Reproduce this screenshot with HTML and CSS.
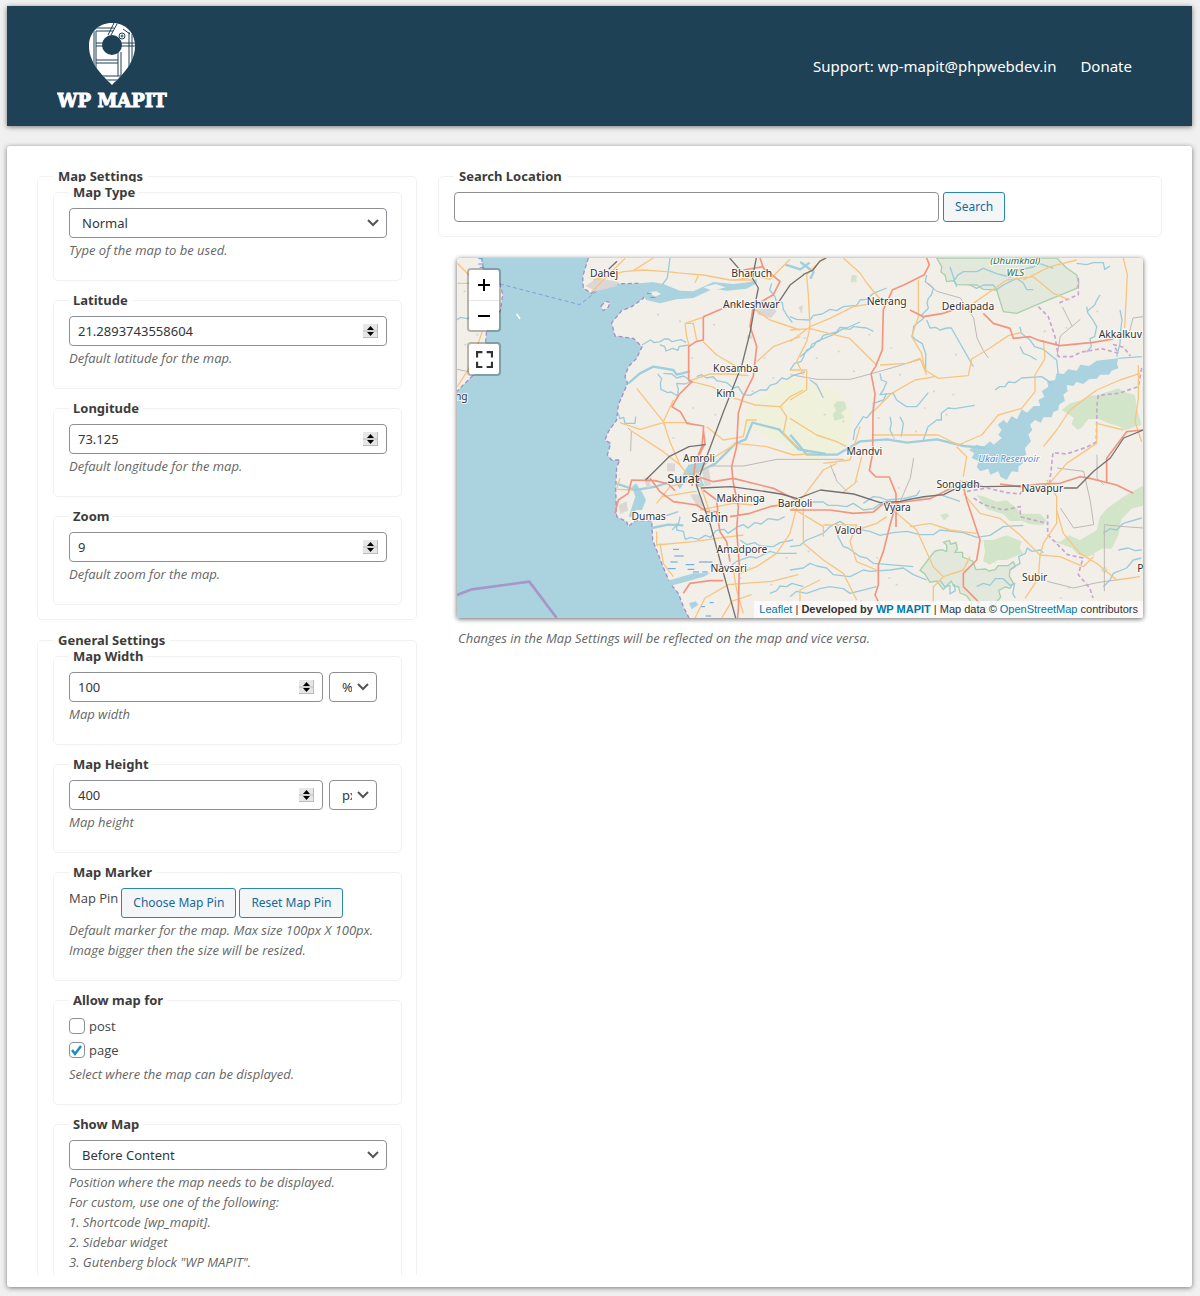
FILE: index.html
```html
<!DOCTYPE html>
<html lang="en">
<head>
<meta charset="utf-8">
<meta name="viewport" content="width=device-width, initial-scale=1">
<title>WP MAPIT Settings</title>
<link rel="stylesheet" href="styles.css">
</head>
<body>
<header class="topbar">
  <svg class="logo" viewBox="0 0 112 88" role="img" aria-label="WP MAPIT">
    <defs>
      <clipPath id="pin"><path d="M55 1C41 1 32 11 32 24c0 17 13 29 23 39 10-10 23-22 23-39C78 11 69 1 55 1z"/></clipPath>
    </defs>
    <g clip-path="url(#pin)">
      <path fill="#fff" d="M30 0h50v64H30z"/>
      <g fill="none" stroke="#1e4156" stroke-width="1">
        <path d="M37 9v44M39 9v44M37 6h20M39 9h17M57 1l-6 12M60 2l-6 11M39 21h7M39 24h7M64 21h14M64 24h14M39 38h22M39 41h22M61 30v24M64 30v24M72 10v40M75 12v34M66 7l7 5M38 54h34M42 58h26"/>
        <circle cx="65" cy="14" r="3"/><circle cx="65" cy="14" r="1"/>
      </g>
      <circle cx="55" cy="23" r="10" fill="#1e4156"/>
    </g>
    <text class="logo-text" x="55" y="85" text-anchor="middle">WP MAPIT</text>
  </svg>
  <nav class="topnav">
    <a href="mailto:wp-mapit@phpwebdev.in">Support: wp-mapit@phpwebdev.in</a>
    <a href="#donate">Donate</a>
  </nav>
</header>

<main class="panel">
  <form class="settings">
    <fieldset class="group">
      <legend class="legend-cut">Map Settings</legend>
      <fieldset class="field">
        <legend><label for="type">Map Type</label></legend>
        <select id="type" class="control"><option>Normal</option></select>
        <p class="hint">Type of the map to be used.</p>
      </fieldset>
      <fieldset class="field">
        <legend><label for="lat">Latitude</label></legend>
        <input id="lat" class="control" type="number" step="any" value="21.2893743558604">
        <p class="hint">Default latitude for the map.</p>
      </fieldset>
      <fieldset class="field">
        <legend><label for="lng">Longitude</label></legend>
        <input id="lng" class="control" type="number" step="any" value="73.125">
        <p class="hint">Default longitude for the map.</p>
      </fieldset>
      <fieldset class="field">
        <legend><label for="zoom">Zoom</label></legend>
        <input id="zoom" class="control" type="number" value="9">
        <p class="hint">Default zoom for the map.</p>
      </fieldset>
    </fieldset>

    <fieldset class="group group-open">
      <legend>General Settings</legend>
      <fieldset class="field">
        <legend><label for="width">Map Width</label></legend>
        <div class="size-row">
          <input id="width" class="control" type="number" value="100">
          <select class="control unit" aria-label="Width unit"><option>%</option><option>px</option></select>
        </div>
        <p class="hint">Map width</p>
      </fieldset>
      <fieldset class="field">
        <legend><label for="height">Map Height</label></legend>
        <div class="size-row">
          <input id="height" class="control" type="number" value="400">
          <select class="control unit" aria-label="Height unit"><option>px</option><option>%</option></select>
        </div>
        <p class="hint">Map height</p>
      </fieldset>
      <fieldset class="field">
        <legend>Map Marker</legend>
        <div class="pin-row">
          <span>Map Pin</span>
          <button type="button" class="button">Choose Map Pin</button>
          <button type="button" class="button">Reset Map Pin</button>
        </div>
        <p class="hint">Default marker for the map. Max size 100px X 100px.<br>Image bigger then the size will be resized.</p>
      </fieldset>
      <fieldset class="field field-checks">
        <legend>Allow map for</legend>
        <label class="check"><input type="checkbox"> post</label>
        <label class="check"><input type="checkbox" checked> page</label>
        <p class="hint">Select where the map can be displayed.</p>
      </fieldset>
      <fieldset class="field field-open">
        <legend><label for="show">Show Map</label></legend>
        <select id="show" class="control"><option>Before Content</option></select>
        <p class="hint">Position where the map needs to be displayed.<br>For custom, use one of the following:<br>1. Shortcode [wp_mapit].<br>2. Sidebar widget<br>3. Gutenberg block "WP MAPIT".</p>
      </fieldset>
    </fieldset>
  </form>

  <section class="preview">
    <fieldset class="group">
      <legend><label for="search">Search Location</label></legend>
      <div class="search-row">
        <input id="search" class="control" type="text">
        <button type="button" class="button">Search</button>
      </div>
    </fieldset>

    <div class="map">
      <svg class="map-canvas" viewBox="0 0 2058 1080" preserveAspectRatio="xMidYMid slice" aria-label="Map of Surat and surroundings">
        <path class="sea" d="M0 0h2058v1080H0z"/>
        <!-- land masses -->
        <path class="land" d="M0 0H74L79 36 129 76 137 110 131 156 89 216 84 276 54 346 0 400z"/>
        <path class="land" d="M394 0L377 56 379 91 404 106 419 91 449 78 549 76 562 96 559 121 524 146 494 158 464 194 474 234 529 241 555 266 539 301 514 326 504 356 512 376 499 406 484 441 479 486 454 521 444 546 461 556 451 591 464 606 489 606 479 626 476 696 479 776 509 791 514 806 534 788 584 788 587 846 614 916 639 976 664 1006 679 1046 696 1080H2058V0z"/>
        <path class="land coast" d="M432 144l14-14 14 4-8 16-14 8z"/>
        <path class="coast" d="M74 0L79 36 129 76 137 110 131 156 89 216 84 276 54 346 0 400M394 0L377 56 379 91 404 106 419 91 449 78 549 76 562 96 559 121 524 146 494 158 464 194 474 234 529 241 555 266 539 301 514 326 504 356 512 376 499 406 484 441 479 486 454 521 444 546 461 556 451 591 464 606 489 606 479 626 476 696 479 776 509 791 514 806 534 788 584 788 587 846 614 916 639 976 664 1006 679 1046 696 1080"/>
        <path class="white" d="M179 168l10 14"/>
        <path class="ferry" d="M129 78L368 140 425 95"/>
        <path class="boundary" d="M0 1011L45 994 217 971 299 1080"/>

        <!-- fields and forests -->
        <path class="scrub" d="M905 420L1000 360 1140 400 1190 470 1170 560 1100 600 1060 618 980 560 900 520 850 500z"/>
        <g class="forest" transform="translate(999 -24)">
          <path d="M815 480l25-20 35-10 20-12 30-3 60-20 15 10 35 10 5 40 15 50-20 5-30 10-20-12-30-8-30-14-30 2-20 25-12 6-18-16 6-20z"/>
          <path d="M130 465l14-12 20 2 6 20-16 14 10 14-30 10-6-20 10-12zM185 75l15 0 0 22-18 0z"/>
          <path d="M560 735l20 4 40 16 30-4 30 24 10 16 60 0 20 20-10 14-40-2-24-10-36 0-20-20-50-16zM580 870l30 0 40-14 20 8 25 10-6 20 10 16-50 20-24 0-26 14-20-10 6-30zM780 870l30 6 26-20 34 14 50-30 10-40 20-24 50-36 60-34 25 40-20 20-40 10-30 30-10 50-20 40-30 0-40 24-30-6-20-20zM450 795l20-6 8 10-16 12zM930 960l16-10 8 10-10 10z"/>
        </g>
        <g class="park" transform="translate(999 -24)">
          <path d="M440 24L455 50 453 66 465 75 470 95 490 92 500 104 560 105 580 118 620 120 640 185 680 190 750 160 860 115 867 100 860 75 830 54 800 24z"/>
          <path d="M425 915l10-12 20-4 15 6 0-20-10-8 18-6 4 12 16-6 4 20-8 10 24 0 0 14 30 12 10 26 30-2 8 6 20-4 8-12 30 0 16-12 6 14-16 10-2 20 12 20-10 16-14-4-20 10 6 20-16 20 4 20-60 14-16-14 0-24-14-20-20-8-4-18-16-4-6-14-24 26-20-26-20 4-16-26-14-10z"/>
        </g>

        <!-- water -->
        <path class="water" d="M1984 301L1980 316 1984 331 1964 338 1956 350 1929 350 1920 362 1896 364 1879 378 1858 372 1850 384 1829 381 1832 400 1819 410 1824 428 1806 440 1804 456 1789 462 1784 478 1759 478 1752 494 1734 486 1719 500 1726 516 1714 530 1722 550 1704 570 1708 590 1694 598 1698 616 1684 626 1684 642 1664 640 1649 666 1630 656 1624 640 1600 650 1594 632 1570 640 1559 626 1566 610 1544 600 1552 586 1536 576 1559 560 1580 566 1599 550 1610 560 1634 540 1624 530 1634 516 1622 500 1640 486 1650 496 1664 474 1680 484 1694 454 1710 464 1730 444 1750 444 1744 426 1762 416 1754 400 1774 386 1770 370 1794 366 1799 346 1820 348 1834 334 1859 338 1870 320 1896 324 1919 308z"/>
        <path class="water" d="M549 76l40-4 30 6 50 20 40 2 60-28 60 6 50-6 20-10 0 14-30 16-60 6-40-6-60 28-50 4-50 12-40-10-20-20z"/>
        <path class="land" d="M574 102l24-2 14 8-18 8zM740 88l36-10 30 10-40 10z"/>
        <path class="water" d="M515 776l20-60-10-30 12-10 20 30 10 20-12 30-18 0 4-18-10 40zM610 976l30-10 70-20 50 0-20 10-70 20-40 10zM660 680l34-60 60-10-30 30 18 44-20 4-20-40-34 46zM696 1036l20-6 8 10-20 14z"/>
        <g class="river wide">
          <path d="M514 376l35-30 40-20 60 10 10 14 40-10M584 810l50-10 45 2M476 676l60 20 60-10 60-20 80-30 40-20 60-60 30-12 20-50 80 20 60 60 80 14"/>
          <path d="M1000 530l50 60 90 0 70-40 80-6 60 10 90-10 80 20 70 6"/>
          <path d="M1030 12l40 30-10 20M985 20l45 14 28-20"/>
        </g>
        <g class="river" transform="translate(-21 -24)">
          <path d="M576 285l25-15 12 8 18-3 12-8 13 0 10 8 27-6 15 8M630 285l14 4 4 14 20-8 16 6 4-12 30-4M640 370l26 2 14 12 20-6 14 8 6 10-16 6-24-2 5 18-2 20-20-12-10 2-20-10-2-18 4-14-12-14M740 380l14-6 16 10 20-4 10 12 30 6 20 16 14-4 16 24 20 2 30-16 20 0 10-14 20-6 16-16 14 4 20-12 35-10M660 24l-8 60-15 20M965 100l-6 20 16 20 4 14 18 4 3 20 12 20 15 20M20 210l12-8 20 4 16-6 30 0M505 490l4 16 12-4 4 18 30 0 2-20"/>
          <path d="M630 800l25-5 30-10M680 820l0 20 20 4 6 24 16-6 24 6 20-12 16 6 16-20 24-4 12 12 30-20 16-6 14 10 20-16 20 4 20-16 30 4 20-10M690 800l-4 20-20 20M870 870l20 14 24-6 16 10 40 2 20-12 40-8M960 1030l20-8 10-14 20 2 16-10 34 10M780 950l20-6 40 6 20-16 40-14 20 4 40-20 20 6 60 0"/>
        </g>
        <g class="river" transform="translate(999 -24)">
          <path d="M0 200l20 8 40 2 10-14 26-4 24-14 20 4 20-12 40-4 10-16 20-2 20-18 40-16M30 320l30-24 6-14 24-10 10-16 40-10 10-14 20 2 40-18M0 360l14-20 20-6 16-34 20-10 10-16 50-20 30-18 20 2 10-8 40 4 20 10M410 75l-4 20 14 10 10 10-6 20-9 10-4 14 4 16-20 20 6 10-30 24-4 30 10 10 20 12 10 30 0 50M410 210l10 24 16-2 14 8 20-6 14 0 66 116M500 110l-20-60M490 95l14-20 16-10 40 0 20-10 40 16 40 10 20-20 50-10 20-10 40 14M540 105l20 10 20-10 30 0 10 14 20-14 40-20 20 14 10 20 20 0M615 420l14-10 16 0 10-14 20 2 20-14 60-4 30 20M400 570l14-40 26-20 14 0 0-20 20-16 20 2 60-10M270 370l4 20 16 6-10 24-10 14 40-4 10 20 20 14 10 6 30 0 35-42M190 570l4-30 26-40 10 4 20-24 0-20 30-10 10-20M890 170l4 20 11 14 15 26-6 30-14 6 4 24-14 16M930 135l-10 16-6 14-24 20M860 40l30 4 20-6 30 0 4 20 16-10M690 230l4 20 26 20 14 20 26 8 20 16 20 16 5 45M690 290l10 20 20 8 20 12M985 325l70-5M990 180l6 30-4 30-2 40-10 40M300 500l4 20-4 20 10 20M330 500l10 20-6 40M60 390l20 14 20 40"/>
          <path d="M0 770l20-8 20 4 30-10 30 0 14 10 26 0 30 4 20-10 30 20 30-4 20-14 40 6 30-16 20-6 30-2 60-10 60 20M220 760l30-20 20 2 20 8 50-4 40-10 10-16M0 890l30-4 20-16 50-20 20-20 30-16 30 20 60 10 30 12 40-8 40-4 40 10 40 0 20-14 70 8 40 14 40-6 40-26 60-4M140 830l4 30 16 30 14 4 36 26 20 4 20 16 120 10M0 960l40-6 20-14 20 8 30 6 20 20 50 6 40-20 20 4 60-4 40-6 30 20 40 16M0 1040l20-16 30 6 40-14 30-6 40 6 20 14 80-20M660 960l14-10 16-10-4-20 20-10 6-16 14 10 24-4 10 8M940 1010l20-20 10-20 40-16 20-24 24-6M985 900l30-6 20 8 20-2M940 850l20-14 20 4 20-20 55-16M450 990l14 20 16-4 0 26 16-10-4-20M560 1010l20-10 20 6 16-20 24 0 20 20 14-6-6 30 8 14"/>
        </g>
        <g class="marsh"><path d="M648 874h18m-14 20h28m-40 18h22m-30 20h24m30-12h26m-20 14h20m14-22h22m-40 30h18m20-30h20m-30 30h16M64 2h12m-12 16h16m-12 10h14M570 106h14m-4 12h16M730 1046h14m14-12h12m-24 40h16"/></g>

        <!-- urban blocks -->
        <path class="urban" d="M385 84l30-20 20-2 50 10-6 12-60 16zM895 150l50-10 14 20-16 20-40-10zM630 616h24v24h-24zM700 710l24-2 16 36-20 2zM485 740l24-10 4 28-24 10zM560 660l14-4 8 30-12 4zM735 640l20-10 8 50-20 6zM870 232h16v10h-16zM1024 148l14-6-4 26z"/>
        <path class="specks" d="M600 170h6m60 20h6m30 110h6m60-100h6m-10 160h6m50 40h6m-120 50h6m60 20h6m40-140h6m60 70h6m30-100h6m20 60h6M1040 240h6m30 60h6m60-20h6m40 60h6m40-110h6m60 40h6m20 80h6m60-40h6m30 90h6m60-110h6m40 30h6m-60 90h6M1100 470h6m50 20h6m100-10h6m40 60h6m60-20h6m20-70h6m60 20h6M20 100h6m10 60h6m-20 100h6m30-30h6M620 500h6m20 40h6m130 340h6m60 80h6m20-30h6m60 50h6m40-80h6M1060 740h6m40 60h6m-60 80h6m200 20h6m30 60h6m-90 70h6m100-50h6M1130 650h6m60 20h6m120 20h6M1860 860h6m40 30h6m-80 100h6m-30 30h6M1760 220h6m60-10h6m20 50h6m60-100h6m-40 120h6"/>

        <!-- state borders -->
        <path class="state" d="M1744 146l30 30 20 60 10 60 40 0 30-14 60-10 50 14-14-26 30 8 20 26M1864 60l0 50-60 26M2054 330l-10 56-60 20-60 6-4 30-2 110-30 16-60 20-40-4-10 90-40 20-20 10M1530 700l60-10 60 14 40 4 10-20M1550 720l30 20 60 16 50-10 0 30 80 20M1772 770l0 60 60 60 46 10-14 50 34 40 10 30"/>

        <!-- minor roads and rail branches -->
        <g class="minor"><path d="M521 580l2-60-10-10M0 334l40 8M760 624l100 0 100-20 200 0M1000 350l80 14 100 0 60-16 70-20 80-24M1410 76l30 24 70 20 40 60 10 60 20 40 14 20M1816 146l30 60M1870 184l-60 50-10 60M1120 620l20 50 30 30M1370 600l-10 60-30 70M1800 630l80 10 20 90 10 70-60 10-40-60M1940 680l-20-20 0-70M1942 1000l0-200 60 6 56 4M1770 970l80 20 70-16 70-10M2058 176l-30 4-10 40"/></g>

        <g class="secondary" transform="translate(-21 -24)">
          <path d="M425 125l60-60 40-40M430 90l90-25 60-5 70 5 50 5 60 5 80 15 70 0M550 62l60-38M735 98l12-25M860 90l60-12 40 10 60-60M705 220l5 40 8 30M705 220l25 0 10 50M705 220l60-20M760 275l40 40 60 35M720 392l60-20 60 0 55 5M725 395l60 15 70 35 60 20 75 5 30-30 40-20M910 175l50 35 90 30M920 335l50-45 80-30M22 100l40 0M22 40l40 40M97 245l-40 110-35 55"/>
          <path d="M560 415l80 100M510 518l60 20 70-20 80 0M640 515l30-65M640 515l20 60 30 70 40 50M540 540l100 65 50 40M770 530l50 40 60-10 10-50 30 0M990 470l20 30-10 50 40 40M720 690l60-60 80-50 90 10 80 25 60-5M500 718l50 2M500 715l10-30M640 740l90-15 10 0M620 760l40-50 70-20M730 660l30 70 20 60M750 780l100-20 60 5M620 845l0 40 110-10 70-10 80-10M630 880l10 60 30 40M735 1104l30-60 70-40 130-10 80-20M815 1104l30-50 60-20M850 960l10 60 20 70M870 970l50-20 60-40 40-60 20-80"/>
        </g>
        <g class="secondary" transform="translate(999 -24)">
          <path d="M160 24l50 45 20 30 50 60M100 24l-50 50 5 60 5 100-10 40-30 60 20 40M0 275l60-45 60-25 70-35 50-8M0 240l60-4 120 30 50 50 30 30M385 90l0 110-20 60 30 50 10 50 40 25 90-8 10-50 50-30 60-40 40-10M270 345l80-5 40-15 20 50M550 160l100-70 80-10 60 50 50 20M760 270l5 55-30 50 0 50-40 50-70 20-50 60-70 30-60-30-200 0M245 490l60-60 70-40 60-10M0 360l50 0 0 60-50 30M700 90l80-40 80-20M1000 24l12 50-8 160M1045 345l0 100-10 70 20 60M1050 370l-60 20-70 30-80 60-40 60-40 50M0 505l80 50 60 20 60 30"/>
          <path d="M100 640l80-10 30-100M215 620l-20 80-40 30M0 770l40-30 60-80 40-20M40 760l0 120 60 50 60 40 40 80M0 770l100 60 0 30M100 825l100 0-20 50 20 60 60 25M200 840l60-20 30-20M320 790l60 50 50 110 30 30 60-20 20-40M360 830l60-10 60 20 80 10M430 1060l0-50 30-30M30 1080l0-60 60-30M520 680l10-60-30-30M520 730l50 60 60 15 60 50 60 60M750 920l10-40 40-60 0-80-30-50M750 915l60 5 70 30 30-30M750 915l-5 70-40 60M800 780l20 70 50 60 50 30 60 50 70-10M770 710l60-70 90-60 0-60 80 20"/>
        </g>
        <g class="primary" transform="translate(-21 -24)">
          <path d="M930 24l10 30 50 40-20 40-60 35-10 60 20 60-10 90-30 60-15 50-5 100-15 60 5 50 15 70-5 70 8 110-3 130-5 50 60 50 30 60M940 50l-60 10M760 200l70-30 50-15M760 200l0 70-22 5-22 15 0 100 10 5-40 40-20 35 25 15 20 35 50 8-5 60-20 50-10 70M495 790l10-40 30-20 10-40 70 2 40 10 20 20M600 685l30 40 40 30 70 10 30 20 30 0 10 60 20 30 10 60M730 675l60 20 60-10 120 30 80 40M760 720l40 30 5 50M840 800l60-10 60-20 60-10M700 1030l20-30 60-8 40 0M760 540l5 40-30 60"/>
        </g>
        <g class="primary" transform="translate(999 -24)">
          <path d="M410 24l8 20-15 30-60 30-35 15-28 60-3 120-20 50-14 22 12 60-6 60-1 120-10 50 20 20 40 0 20 50 0 100M360 180l40 20 60-10 30-10M580 190l30 30 50 15 10 30 50-5 30 12 60 15 100-10 60-10M0 780l120 0 70 10 60-4 30-25 60-5 80-10 60-30 30-22 60 8M320 755l-20 70-20 80-15 40 0 60-10 30 20 40M520 710l10 40 20 60 20 60-10 60-40 40 0 40 50 50M630 702l60 8 60-8 60-2 60-20 30 5 80 20 50 25M950 695l0-70 60-80 50-5"/>
        </g>
        <path class="rail" d="M818 0l40 46M898 0L886 60 904 90 894 140 880 220 855 320 800 460 740 620 718 680 760 800 836 1080M960 140L1000 80 1040 50M480 10L455 34M566 666l70-70 60-30 50-6M732 690l90-4 60 8 90 14 50 14 68-26 100 12 80 26 60-4 70-14 60-6 60-30 60 6 110-2M1820 690h40l50-50 50-40 40-60 58-24M1038 50l30-14 20-26 20-10"/>

        <g class="label">
          <text x="441" y="58">Dahej</text>
          <text x="884" y="58">Bharuch</text>
          <text x="883" y="151">Ankleshwar</text>
          <text x="1289" y="140">Netrang</text>
          <text x="1533" y="155">Dediapada</text>
          <text x="1990" y="239">Akkalkuv</text>
          <text x="836" y="343">Kosamba</text>
          <text x="806" y="416">Kim</text>
          <text x="13" y="426">ng</text>
          <text x="726" y="611">Amroli</text>
          <text x="1222" y="591">Mandvi</text>
          <text x="851" y="731">Makhinga</text>
          <text x="1014" y="747">Bardoli</text>
          <text x="1321" y="759">Vyara</text>
          <text x="1503" y="690">Songadh</text>
          <text x="1756" y="703">Navapur</text>
          <text x="575" y="786">Dumas</text>
          <text x="1174" y="829">Valod</text>
          <text x="855" y="885">Amadpore</text>
          <text x="815" y="941">Navsari</text>
          <text x="1733" y="970">Subir</text>
          <text x="2050" y="942">P</text>
          <text class="city" x="679" y="675">Surat</text>
          <text class="town" x="758" y="792">Sachin</text>
          <text class="lake" x="1656" y="612">Ukai Reservoir</text>
          <text class="wild" x="1675" y="19">(Dhumkhal)</text>
          <text class="wild" x="1675" y="54">WLS</text>
        </g>
      </svg>
      <div class="map-controls">
        <div class="map-bar">
          <button type="button" aria-label="Zoom in"><svg viewBox="0 0 14 14"><path d="M1 7h12M7 1v12"/></svg></button>
          <button type="button" aria-label="Zoom out"><svg viewBox="0 0 14 14"><path d="M1 7h12"/></svg></button>
        </div>
        <div class="map-bar">
          <button type="button" aria-label="Full screen"><svg class="full" viewBox="0 0 16 16"><path d="M1 6V1h5M10 1h5v5M15 10v5h-5M6 15H1v-5"/></svg></button>
        </div>
      </div>
      <div class="attribution"><a href="#leaflet">Leaflet</a> | <b>Developed by <a href="#mapit">WP MAPIT</a></b> | Map data © <a href="#osm">OpenStreetMap</a> contributors</div>
    </div>
    <p class="hint map-hint">Changes in the Map Settings will be reflected on the map and vice versa.</p>
  </section>
</main>
</body>
</html>
```
FILE: styles.css
```css
* { box-sizing: border-box; }

body {
  margin: 0;
  padding: 6px 8px 9px 7px;
  background: #f0f0f0;
  color: #444;
  font: 13px/20px "Open Sans", "Noto Sans", sans-serif;
}

.topbar {
  display: flex;
  align-items: center;
  justify-content: space-between;
  min-height: 120px;
  padding: 0 60px 0 50px;
  background: #1e4156;
  box-shadow: 0 1px 5px rgba(0, 0, 0, .5);
}
.logo { width: 112px; height: 88px; }
.logo-text { font: 900 18px "DejaVu Serif", serif; fill: #fff; stroke: #fff; stroke-width: 1; }
.topnav { display: flex; gap: 24px; font-family: "Noto Sans", sans-serif; font-size: 15px; }
.topnav a { color: #fff; text-decoration: none; }

.panel {
  display: grid;
  grid-template-columns: 380px minmax(0, 1fr);
  align-items: start;
  gap: 21px;
  margin-top: 20px;
  padding: 23px 30px 12px;
  border-radius: 3px;
  background: #fff;
  box-shadow: 0 1px 5px rgba(0, 0, 0, .5);
}

fieldset {
  min-width: 0;
  margin: 0;
  border: 1px solid #f1f1f1;
  border-radius: 5px;
}
legend {
  padding: 0 5px;
  color: #3c3c3c;
  font: 700 13px/15px "Noto Sans", "Open Sans", sans-serif;
}
.group { padding: 0 14px 14px 15px; }
.group + .group { margin-top: 13px; }
.legend-cut { clip-path: inset(0 0 2px 0); }
.field { margin-top: 12px; padding: 8px 14px 20px 15px; }
.field:first-of-type { margin-top: 1px; }
.field > legend { padding: 0 4px; }
.field-checks { padding-top: 6px; }
.group-open { padding-bottom: 0; border-bottom: 0; border-radius: 5px 5px 0 0; }
.field-open { padding-bottom: 3px; border-bottom: 0; border-radius: 5px 5px 0 0; }

.control {
  display: block;
  width: 100%;
  height: 30px;
  margin: 0;
  padding: 0 8px;
  border: 1px solid #8c8f94;
  border-radius: 4px;
  background: #fff;
  color: #32373c;
  font: 13px/28px "Noto Sans", "Open Sans", sans-serif;
}
select.control {
  appearance: none;
  padding: 0 24px 0 12px;
  background: #fff url("data:image/svg+xml,%3Csvg xmlns='http://www.w3.org/2000/svg' width='12' height='8' viewBox='0 0 12 8'%3E%3Cpath d='M1 1l5 5 5-5' fill='none' stroke='%23555' stroke-width='2'/%3E%3C/svg%3E") no-repeat right 7px center;
}
input::-webkit-inner-spin-button {
  appearance: none;
  width: 15px;
  height: 28px;
  opacity: 1;
  background: url("data:image/svg+xml,%3Csvg xmlns='http://www.w3.org/2000/svg' width='15' height='14' viewBox='0 0 15 14'%3E%3Cpath fill='%23e6e6e6' d='M0 0h15v14H0z'/%3E%3Cpath stroke='%23bbb' d='M0 7h15M0 13.500h15M14.500 0v14'/%3E%3Cpath d='M4 6l3.500-4L11 6zM4 8l3.500 4L11 8z'/%3E%3C/svg%3E") no-repeat center;
}
.size-row { display: flex; gap: 6px; padding-right: 10px; }
.size-row .unit { flex: 0 0 48px; }

.hint {
  margin: 2px 0 0;
  color: #666;
  font-size: 13px;
  font-style: italic;
  line-height: 20px;
}

.button {
  height: 30px;
  padding: 0 11px;
  border: 1px solid #2a87ae;
  border-radius: 3px;
  background: #f3f5f6;
  color: #16699b;
  font: 12px/28px "Noto Sans", "Open Sans", sans-serif;
  white-space: nowrap;
}
.pin-row { display: flex; gap: 3px; }

.check {
  display: flex;
  align-items: center;
  gap: 4px;
  height: 24px;
}
.check input {
  appearance: none;
  width: 16px;
  height: 16px;
  margin: 0;
  border: 1px solid #8c8f94;
  border-radius: 4px;
  background: #fff;
}
.check input:checked {
  background: url("data:image/svg+xml,%3Csvg xmlns='http://www.w3.org/2000/svg' width='14' height='14' viewBox='0 0 14 14'%3E%3Cpath d='M2 7l3 4 6-8' fill='none' stroke='%231e8cbe' stroke-width='2.500'/%3E%3C/svg%3E") no-repeat center;
}

.search-row {
  display: flex;
  gap: 4px;
  padding-top: 8px;
}
.search-row .control { flex: 0 1 70%; }

.map {
  position: relative;
  height: 360px;
  margin: 21px 19px 0;
  overflow: hidden;
  border-radius: 2px;
  box-shadow: 0 1px 5px rgba(0, 0, 0, .6);
}
.map-canvas { display: block; width: 100%; height: 100%; }
.map-controls {
  position: absolute;
  top: 10px;
  left: 10px;
  display: grid;
  gap: 10px;
}
.map-bar {
  border: 2px solid rgba(0, 0, 0, .25);
  border-radius: 4px;
  background: #fff;
  background-clip: padding-box;
}
.map-bar button {
  display: grid;
  place-items: center;
  width: 30px;
  height: 30px;
  padding: 0;
  border: 0;
  background: none;
}
.map-bar button + button { border-top: 1px solid #e6e6e6; }
.map-bar svg { width: 14px; height: 14px; fill: none; stroke: #000; stroke-width: 2; }
.map-bar .full { width: 17px; height: 17px; stroke: #333; }
.attribution {
  position: absolute;
  right: 0;
  bottom: 0;
  padding: 0 5px;
  background: rgba(255, 255, 255, .7);
  color: #333;
  font: 11px/17px "Liberation Sans", Arial, sans-serif;
  white-space: nowrap;
}
.attribution a { color: #0078a8; text-decoration: none; }
.map-hint { margin: 10px 20px 0; }

/* map drawing */
.map-canvas path { fill: none; stroke-linejoin: round; }
.map-canvas .sea, .map-canvas .water { fill: #aad3df; }
.map-canvas .land { fill: #f2efe9; }
.map-canvas .scrub { fill: #f0f1da; }
.map-canvas .urban { fill: #dcd7d4; }
.map-canvas .forest path { fill: #d3e5c9; }
.map-canvas .park path { fill: #e2e9dc; stroke: #a9d0ab; stroke-width: 4; }
.specks { stroke: #d9d2d2; stroke-width: 5; }
.coast { stroke: #a58fc4; stroke-width: 4; stroke-dasharray: 12 8; }
.ferry { stroke: #7f9fd8; stroke-width: 3; stroke-dasharray: 12 8; }
.white { stroke: #fff; stroke-width: 5; }
.boundary { stroke: #a796c6; stroke-width: 8; }
.river path { stroke: #9bcbdb; stroke-width: 4; }
.river.wide path { stroke: #a0cedd; stroke-width: 7; }
.marsh path { stroke: #5a9fe0; stroke-width: 3; }
.state { stroke: #c8a5d2; stroke-width: 5; stroke-dasharray: 12 8; }
.minor path { stroke: #bdb8b8; stroke-width: 3; }
.secondary path { stroke: #f8c580; stroke-width: 4; }
.primary path { stroke: #f2957e; stroke-width: 5; }
.rail { stroke: #757171; stroke-width: 4; }
.label text {
  fill: #333;
  stroke: #fff;
  stroke-opacity: .8;
  stroke-width: 6;
  paint-order: stroke;
  font: 31px "Noto Sans", sans-serif;
  text-anchor: middle;
}
.label text.city { font-size: 39px; }
.label text.town { font-size: 36px; }
.label text.lake { fill: #5d8fc4; font-size: 29px; font-style: italic; }
.label text.wild { fill: #2f7040; font-size: 29px; font-style: italic; }
```
